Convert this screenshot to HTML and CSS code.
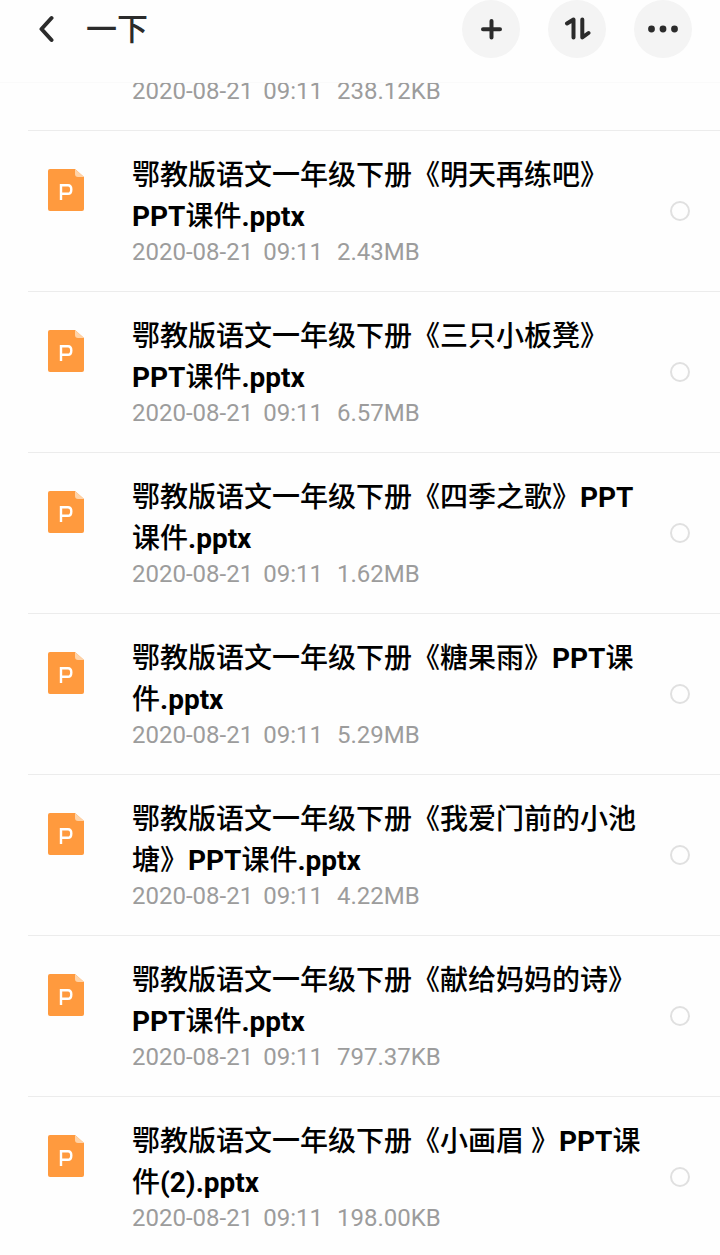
FILE: index.html
```html
<!DOCTYPE html>
<html lang="zh-CN">
  <head>
    <meta charset="UTF-8" />
    <meta name="viewport" content="width=device-width, initial-scale=1.0" />
    <title>一下</title>
    <link rel="stylesheet" href="styles.css">
  </head>
  <body>
    <header class="topbar">
      <button type="button" class="back" aria-label="返回">
        <svg width="16" height="28" viewBox="0 0 16 28"><path d="M13.500 3 L3.500 14 L13.500 25" /></svg>
      </button>
      <h1>一下</h1>
      <div class="actions">
        <button type="button" class="round" aria-label="添加">
          <svg width="24" height="24" viewBox="0 0 24 24"><path d="M12.500 4V20.500M4 12.300H21" /></svg>
        </button>
        <button type="button" class="round" aria-label="排序">
          <svg class="sort" width="28" height="28" viewBox="0 0 28 28"><path d="M4 8.500L10.500 4.500V22.500M19.300 4.500V22.500L25.500 18" /></svg>
        </button>
        <button type="button" class="round" aria-label="更多">
          <svg class="dots" width="32" height="8" viewBox="0 0 32 8"><circle cx="4.500" cy="4" r="3.400" /><circle cx="16" cy="4" r="3.400" /><circle cx="27.500" cy="4" r="3.400" /></svg>
        </button>
      </div>
    </header>

    <!-- file icon, reused by every row -->
    <svg width="0" height="0" class="defs">
      <symbol id="ppt" viewBox="0 0 36 42">
        <path fill="#ff9a3e" d="M2 0H27L36 8V40Q36 42 34 42H2Q0 42 0 40V2Q0 0 2 0Z" />
        <path fill="#ffd3a8" d="M27 0L36 8H30Q27 8 27 5Z" />
        <path fill="none" stroke="#fff" stroke-width="2.400" d="M13 31V16.200H20Q23.300 16.200 23.300 20.500T20 24.800H13" />
      </symbol>
    </svg>

    <main>
      <ul class="files">
        <li class="file">
          <p class="meta"><span>2020-08-21</span><span>09:11</span><span class="size">238.12KB</span></p>
        </li>
        <li class="file">
          <svg class="icon"><use href="#ppt" /></svg>
          <div class="info">
            <label class="name" for="f1">鄂教版语文一年级下册《明天再练吧》<b>PPT</b>课件<b>.pptx</b></label>
            <p class="meta"><span>2020-08-21</span><span>09:11</span><span class="size">2.43MB</span></p>
          </div>
          <input type="checkbox" id="f1" />
        </li>
        <li class="file">
          <svg class="icon"><use href="#ppt" /></svg>
          <div class="info">
            <label class="name" for="f2">鄂教版语文一年级下册《三只小板凳》<b>PPT</b>课件<b>.pptx</b></label>
            <p class="meta"><span>2020-08-21</span><span>09:11</span><span class="size">6.57MB</span></p>
          </div>
          <input type="checkbox" id="f2" />
        </li>
        <li class="file">
          <svg class="icon"><use href="#ppt" /></svg>
          <div class="info">
            <label class="name" for="f3">鄂教版语文一年级下册《四季之歌》<b>PPT</b>课件<b>.pptx</b></label>
            <p class="meta"><span>2020-08-21</span><span>09:11</span><span class="size">1.62MB</span></p>
          </div>
          <input type="checkbox" id="f3" />
        </li>
        <li class="file">
          <svg class="icon"><use href="#ppt" /></svg>
          <div class="info">
            <label class="name" for="f4">鄂教版语文一年级下册《糖果雨》<b>PPT</b>课件<b>.pptx</b></label>
            <p class="meta"><span>2020-08-21</span><span>09:11</span><span class="size">5.29MB</span></p>
          </div>
          <input type="checkbox" id="f4" />
        </li>
        <li class="file">
          <svg class="icon"><use href="#ppt" /></svg>
          <div class="info">
            <label class="name" for="f5">鄂教版语文一年级下册《我爱门前的小池塘》<b>PPT</b>课件<b>.pptx</b></label>
            <p class="meta"><span>2020-08-21</span><span>09:11</span><span class="size">4.22MB</span></p>
          </div>
          <input type="checkbox" id="f5" />
        </li>
        <li class="file">
          <svg class="icon"><use href="#ppt" /></svg>
          <div class="info">
            <label class="name" for="f6">鄂教版语文一年级下册《献给妈妈的诗》<b>PPT</b>课件<b>.pptx</b></label>
            <p class="meta"><span>2020-08-21</span><span>09:11</span><span class="size">797.37KB</span></p>
          </div>
          <input type="checkbox" id="f6" />
        </li>
        <li class="file">
          <svg class="icon"><use href="#ppt" /></svg>
          <div class="info">
            <label class="name" for="f7">鄂教版语文一年级下册《小画眉 》<b>PPT</b>课件<b>(2).pptx</b></label>
            <p class="meta"><span>2020-08-21</span><span>09:11</span><span class="size">198.00KB</span></p>
          </div>
          <input type="checkbox" id="f7" />
        </li>
      </ul>
    </main>
  </body>
</html>
```
FILE: styles.css
```css
* {
  box-sizing: border-box;
}
body {
  display: flex;
  flex-direction: column;
  height: 100vh;
  margin: 0;
  background: #fefefe;
  color: #000;
  font-family: Roboto, "Noto Sans CJK SC", sans-serif;
}
button {
  display: flex;
  align-items: center;
  justify-content: center;
  padding: 0;
  border: 0;
  background: none;
  cursor: pointer;
}
button svg {
  fill: none;
  stroke: #2b2b2b;
  stroke-width: 4;
  stroke-linecap: round;
  stroke-linejoin: round;
}

/* top bar */
.topbar {
  display: flex;
  flex: none;
  align-items: flex-start;
  height: 83px;
  padding: 0 28px 0 38px;
  border-bottom: 1px solid #fafafa;
}
.back {
  height: 58px;
}
h1 {
  flex: 1;
  margin: 0 0 0 32px;
  color: #2b2b2b;
  font-size: 31px;
  font-weight: 500;
  line-height: 60px;
}
.actions {
  display: flex;
  gap: 28px;
}
.round {
  width: 58px;
  height: 58px;
  border-radius: 50%;
  background: #f4f4f4;
}
.round .dots {
  fill: #2b2b2b;
  stroke: none;
}

/* file list */
.defs {
  position: absolute;
}
main {
  flex: 1;
  min-height: 0;
  overflow: hidden;
}
.files {
  margin: -7px 0 0;
  padding: 0 0 0 28px;
  list-style: none;
}
.file {
  display: flex;
  align-items: center;
  padding: 24px 30px 24px 20px;
  border-bottom: 1px solid #ececec;
}
.file:first-child {
  padding-top: 0;
  padding-left: 104px;
}
.icon {
  flex: none;
  align-self: flex-start;
  width: 36px;
  height: 42px;
  margin: 14px 48px 0 0;
}
.info {
  flex: 1;
  min-width: 0;
  margin-right: 28px;
}
.name {
  display: block;
  font-size: 28px;
  font-weight: 500;
  line-height: 41px;
}
.name b {
  font-weight: 700;
}
.meta {
  display: flex;
  gap: 10px;
  margin: 0;
  color: #9c9c9c;
  font-size: 24px;
  line-height: 30px;
}
.size {
  margin-left: 4px;
}
input {
  appearance: none;
  flex: none;
  width: 20px;
  height: 20px;
  margin: 0;
  border: 2px solid #e0e0e0;
  border-radius: 50%;
}
input:checked {
  border-color: #ff9a3e;
  background: #ff9a3e;
}
```
